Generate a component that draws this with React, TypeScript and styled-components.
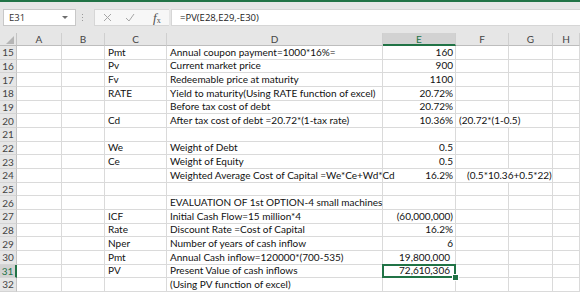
import React from 'react';
import styled, { createGlobalStyle, css } from 'styled-components';

const GREEN = '#217346';

type Row = {
  n: number;
  c?: string;
  d?: string;
  e?: string;
  f?: string;
  fIndent?: number;
  ePad?: number;
};

const rows: Row[] = [
  { n: 15, c: 'Pmt', d: 'Annual coupon payment=1000*16%=', e: '160' },
  { n: 16, c: 'Pv', d: 'Current market price', e: '900' },
  { n: 17, c: 'Fv', d: 'Redeemable price at maturity', e: '1100' },
  { n: 18, c: 'RATE', d: 'Yield to maturity(Using RATE function of excel)', e: '20.72%' },
  { n: 19, d: 'Before tax cost of debt', e: '20.72%' },
  { n: 20, c: 'Cd', d: 'After tax cost of debt =20.72*(1-tax rate)', e: '10.36%', f: '(20.72*(1-0.5)' },
  { n: 21 },
  { n: 22, c: 'We', d: 'Weight of Debt', e: '0.5' },
  { n: 23, c: 'Ce', d: 'Weight of Equity', e: '0.5' },
  { n: 24, d: 'Weighted Average Cost of Capital =We*Ce+Wd*Cd', e: '16.2%', f: '(0.5*10.36+0.5*22)', fIndent: 8 },
  { n: 25 },
  { n: 26, d: 'EVALUATION OF 1st OPTION-4 small machines' },
  { n: 27, c: 'ICF', d: 'Initial Cash Flow=15 million*4', e: '(60,000,000)' },
  { n: 28, c: 'Rate', d: 'Discount Rate =Cost of Capital', e: '16.2%' },
  { n: 29, c: 'Nper', d: 'Number of years of cash inflow', e: '6' },
  { n: 30, c: 'Pmt', d: 'Annual Cash inflow=120000*(700-535)', e: '19,800,000', ePad: 3 },
  { n: 31, c: 'PV', d: 'Present Value of cash inflows', e: '72,610,306', ePad: 3 },
  { n: 32, d: '(Using PV function of excel)' },
];

const columns = ['A', 'B', 'C', 'D', 'E', 'F', 'G', 'H'];
const SELECTED_ROW = 31;

const GlobalStyle = createGlobalStyle`
  html, body {
    margin: 0;
    padding: 0;
    background: #ffffff;
  }
  body {
    font-family: Lato, 'Liberation Sans', sans-serif;
  }
`;

const Window = styled.div`
  width: 580px;
  height: 294px;
  overflow: hidden;
  display: flex;
  flex-direction: column;
  background: #ffffff;
`;

const TopStrip = styled.div`
  height: 2px;
  background: ${GREEN};
`;

const FormulaBar = styled.div`
  height: 31px;
  box-sizing: border-box;
  background: #e6e6e6;
  display: flex;
  align-items: center;
  padding: 0 0 0 3px;
`;

const NameBox = styled.div`
  width: 73px;
  height: 17px;
  box-sizing: border-box;
  background: #ffffff;
  border: 1px solid #c8c8c8;
  display: flex;
  align-items: center;
  justify-content: space-between;
  padding: 0 7px 0 5px;
  font-family: 'Open Sans', sans-serif;
  font-size: 9.5px;
  color: #333333;
`;

const DropArrow = styled.span`
  width: 0;
  height: 0;
  border-left: 3px solid transparent;
  border-right: 3px solid transparent;
  border-top: 3px solid #6e6e6e;
`;

const Grip = styled.div`
  width: 2px;
  margin: 0 10px 0 6px;
  display: flex;
  flex-direction: column;
  gap: 2px;
  & > span {
    width: 1px;
    height: 1px;
    background: #9a9a9a;
  }
`;

const IconBox = styled.div`
  width: 75px;
  height: 17px;
  box-sizing: border-box;
  background: #f7f7f7;
  border: 1px solid #d6d6d6;
  border-right: none;
  display: flex;
  align-items: center;
  padding-left: 8px;
  gap: 13px;
`;

const Fx = styled.span`
  font-family: 'Liberation Serif', serif;
  font-style: italic;
  font-size: 13px;
  line-height: 1;
  color: #505050;
  margin-left: 5px;
  & > sub {
    font-size: 8px;
    font-style: normal;
    vertical-align: -1px;
  }
`;

const FormulaInput = styled.div`
  flex: 1;
  height: 17px;
  box-sizing: border-box;
  background: #ffffff;
  border: 1px solid #d6d6d6;
  border-right: none;
  margin-left: 2px;
  display: flex;
  align-items: center;
  padding-left: 8px;
  font-family: 'Open Sans', sans-serif;
  font-size: 9.5px;
  color: #222222;
`;

const Sheet = styled.div`
  display: grid;
  grid-template-columns: 17px 45px 43px 62px 216px 73px 53px 44px 1fr;
  grid-template-rows: 13px;
  grid-auto-rows: 13.67px;
  font-family: Lato, 'Liberation Sans', sans-serif;
  font-size: 10px;
  color: #111111;
`;

const Corner = styled.div`
  box-sizing: border-box;
  background: #e6e6e6;
  border-right: 1px solid #c4c4c4;
  border-bottom: 1px solid #bdbdbd;
  display: flex;
  align-items: flex-end;
  justify-content: flex-end;
  padding: 0 2px 1px 0;
`;

const ColHead = styled.div<{ $active?: boolean }>`
  box-sizing: border-box;
  background: ${p => (p.$active ? '#d2d2d2' : '#e6e6e6')};
  border-right: 1px solid #cfcfcf;
  border-bottom: ${p => (p.$active ? `2px solid ${GREEN}` : '1px solid #bdbdbd')};
  display: flex;
  align-items: center;
  justify-content: center;
  color: ${p => (p.$active ? GREEN : '#444444')};
  font-size: 10px;
`;

const RowHead = styled.div<{ $active?: boolean }>`
  box-sizing: border-box;
  background: ${p => (p.$active ? '#d2d2d2' : '#e6e6e6')};
  border-right: ${p => (p.$active ? `2px solid ${GREEN}` : '1px solid #c4c4c4')};
  border-bottom: 1px solid #d4d4d4;
  display: flex;
  align-items: center;
  justify-content: center;
  color: ${p => (p.$active ? GREEN : '#444444')};
  font-size: 10px;
`;

const Cell = styled.div<{ $right?: boolean; $span?: number; $indent?: number; $pad?: number; $selected?: boolean }>`
  box-sizing: border-box;
  min-width: 0;
  border-right: 1px solid #dadada;
  border-bottom: 1px solid #dadada;
  display: flex;
  align-items: flex-end;
  justify-content: ${p => (p.$right ? 'flex-end' : 'flex-start')};
  padding: 0 ${p => 2 + (p.$pad ?? 0)}px 1px ${p => 3 + (p.$indent ?? 0)}px;
  white-space: nowrap;
  line-height: 11px;
  ${p =>
    p.$span &&
    css`
      grid-column: span ${p.$span};
    `}
  ${p =>
    p.$selected &&
    css`
      position: relative;
      z-index: 1;
      &::after {
        content: '';
        position: absolute;
        left: -1px;
        top: -1px;
        right: -1px;
        bottom: -1px;
        border: 2px solid ${GREEN};
      }
    `}
`;

const Handle = styled.span`
  position: absolute;
  right: -3px;
  bottom: -3px;
  width: 5px;
  height: 5px;
  box-sizing: border-box;
  background: ${GREEN};
  outline: 1px solid #ffffff;
  z-index: 2;
`;

const CrossIcon = () => (
  <svg width="9" height="9" viewBox="0 0 9 9">
    <path d="M1 1 L8 8 M8 1 L1 8" stroke="#a6a6a6" strokeWidth="1" fill="none" />
  </svg>
);

const CheckIcon = () => (
  <svg width="10" height="9" viewBox="0 0 10 9">
    <path d="M1 5 L4 8 L9 1" stroke="#a6a6a6" strokeWidth="1" fill="none" />
  </svg>
);

const CornerMark = () => (
  <svg width="8" height="8" viewBox="0 0 8 8">
    <polygon points="8,0 8,8 0,8" fill="#b5b5b5" />
  </svg>
);

const SheetRow = ({ row }: { row: Row }) => {
  const active = row.n === SELECTED_ROW;
  return (
    <>
      <RowHead $active={active}>{row.n}</RowHead>
      <Cell />
      <Cell />
      <Cell>{row.c}</Cell>
      <Cell>{row.d}</Cell>
      <Cell $right $pad={row.ePad} $selected={active}>
        {row.e}
        {active && <Handle />}
      </Cell>
      {row.f ? (
        <Cell $span={2} $indent={row.fIndent}>
          {row.f}
        </Cell>
      ) : (
        <>
          <Cell />
          <Cell />
        </>
      )}
      <Cell />
    </>
  );
};

const App = () => {
  return (
    <Window>
      <GlobalStyle />
      <TopStrip />
      <FormulaBar>
        <NameBox>
          E31
          <DropArrow />
        </NameBox>
        <Grip>
          <span />
          <span />
          <span />
        </Grip>
        <IconBox>
          <CrossIcon />
          <CheckIcon />
          <Fx>
            f<sub>x</sub>
          </Fx>
        </IconBox>
        <FormulaInput>=PV(E28,E29,-E30)</FormulaInput>
      </FormulaBar>
      <Sheet>
        <Corner>
          <CornerMark />
        </Corner>
        {columns.map(c => (
          <ColHead key={c} $active={c === 'E'}>
            {c}
          </ColHead>
        ))}
        {rows.map(r => (
          <SheetRow key={r.n} row={r} />
        ))}
      </Sheet>
    </Window>
  );
};

export default App;
